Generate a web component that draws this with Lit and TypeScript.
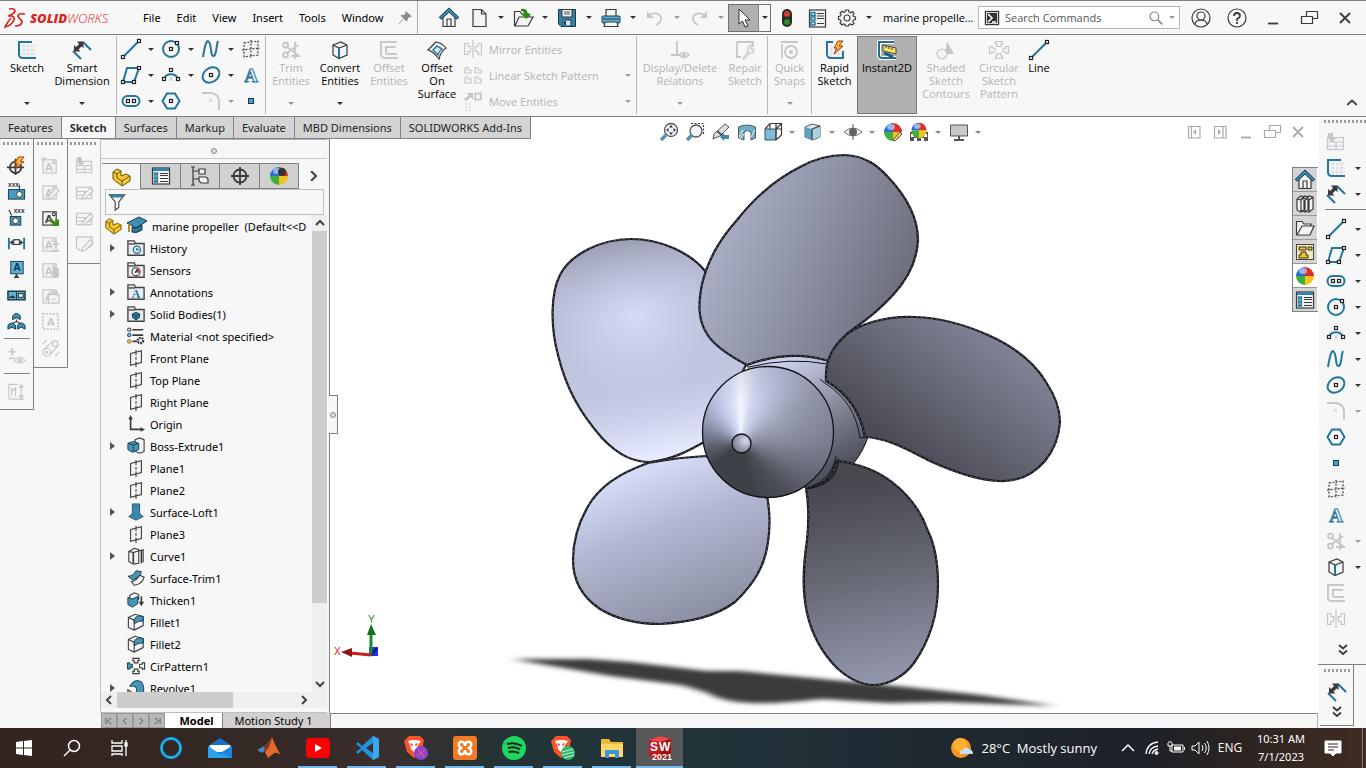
import { LitElement, html, svg, css, nothing } from "lit";
import { customElement, state } from "lit/decorators.js";

const node = (x: number, y: number) => svg`<rect class="n" x=${x - 1.5} y=${y - 1.5} width="3" height="3"/>`;
const folder = svg`<path d="M1 18V2H8L9.500 5H19V18Z" fill="#e9edf0" stroke="#444" stroke-width="1.500"/><path d="M1.500 5.500H9" stroke="#444" stroke-width="1.500"/>`;
const ball = svg`<path fill="#2b6fd0" d="M10 10V1A9 9 0 0 0 1 10Z"/><path fill="#d8312a" d="M10 10V1A9 9 0 0 1 19 10Z"/><path fill="#3fae3a" d="M10 10H1A9 9 0 0 0 10 19Z"/><path fill="#f2c21c" d="M10 10H19A9 9 0 0 1 10 19Z"/><ellipse cx="8" cy="5" rx="4" ry="3" fill="#fff" opacity=".5"/>`;
const cube = svg`<path class="k lt" d="M3 5L11 2L17 5V15L9 18.500L3 15Z"/><path class="k" d="M3 5L9 8L17 5M9 8V18"/>`;
const note = svg`<rect class="k lt" x="2" y="4" width="14" height="14"/><text class="ga" x="4" y="16">A</text><circle class="k" cx="13.500" cy="6.500" r="1.500"/>`;
const pencil = svg`<path class="k lt" d="M8 15L16 6L19 9L11 17L7 18Z"/>`;
const sheet = svg`<rect class="k lt" x="1.500" y="5.500" width="16" height="12"/><path class="k" d="M1 10H18M1 14H18M10 10V18"/>`;

const ICONS: Record<string, unknown> = {
  sketch: svg`<path class="g" d="M7 4V18M11 4V18M15 4V18M4 6H19M4 10H19M4 14H19"/><path class="b" d="M15 2H2V14Q2 18 6 18H19"/>`,
  dim: svg`<path class="b" d="M11 2L19 10M1 11L9 19"/><path class="fk" d="M11.500 1.500V8L9.500 6.500L6.500 9.500L8.500 11.500H2V5L4 7L7 4L5 1.500Z"/>`,
  line: svg`<path class="b" d="M2 18L18 2"/>${node(2, 18)}${node(18, 2)}`,
  circle: svg`<circle class="b" cx="10" cy="10" r="8"/>${node(10, 10)}${node(16, 4)}`,
  spline: svg`<path class="b" d="M2 18C4 5 6 0 8 3C11 7 9 18 13 17C16 15 15 6 17 2"/>`,
  gridplane: svg`<path class="k dash lt" d="M3 4L17 2V16L3 18Z"/><path class="k dash" d="M10 1V19M1 11L19 9"/>`,
  para: svg`<path class="b" d="M6 3H18L13 17H2Z"/>${node(18, 3)}${node(2, 17)}${node(13, 17)}`,
  arc: svg`<path class="b" d="M3 14A7.500 7.500 0 0 1 17 14"/><path class="g2" d="M8 12L12 16M12 12L8 16"/>${node(3, 14)}${node(17, 14)}${node(10, 5)}`,
  ellipse: svg`<ellipse class="b" cx="10" cy="10" rx="9" ry="7" transform="rotate(-35 10 10)"/>${node(10, 10)}`,
  text: svg`<text class="ta" x="10" y="17">A</text>`,
  slot: svg`<rect class="b" x="1.500" y="5" width="17" height="10" rx="5"/>${node(7, 10)}${node(13, 10)}`,
  hex: svg`<path class="b" d="M6 2.500H14L18.500 10L14 17.500H6L1.500 10Z"/>${node(10, 10)}`,
  fillet: svg`<path class="gb" d="M1 2H10Q18 3 18 11V19"/><path class="g2" d="M8 8L11 11M11 8L8 11"/>`,
  point: svg`<rect x="7.500" y="7.500" width="5" height="5" fill="#4aa3cf" stroke="#0c3a55"/>`,
  trim: svg`<circle class="k2" cx="4.500" cy="5" r="2.500"/><circle class="k2" cx="4.500" cy="15" r="2.500"/><path class="k2" d="M6 7L18 16M6 13L17 5M14 2V19M10 16H19"/>`,
  convert: svg`${cube}<path class="b" d="M9 8V18"/>`,
  offset: svg`<path class="gb" d="M18 2H2V14Q2 18 6 18H19"/><path class="gb" d="M17 7H7V12Q7 14 9 14H18"/>`,
  surface: svg`<path class="k lt" d="M1 10L9 2Q15 3 19 8Q14 11 12 19Q7 12 1 10Z"/><path class="b1" d="M6 10L10 6L15 9Q12 11 11 15Z"/>`,
  mirror: svg`<path class="k" d="M10 1V19M1.500 4.500H5V7.500H7.500V12.500H5V15.500H1.500ZM18.500 4.500H15V7.500H12.500V12.500H15V15.500H18.500Z"/>`,
  pattern: svg`<path class="k" d="M2 2.500H5V5H8V8H2ZM12 2.500H15V5H18V8H12ZM2 12H5V14H8V18H2ZM12 12H15V14H18V18H12Z"/>`,
  move: svg`<path class="fk" d="M1 8L6 4L3 2H10V9L8 6L3 10Z"/><rect class="k2" x="12" y="2.500" width="6" height="6"/><path class="g2 dash" d="M2 13H9M2 16H9M2 19H9"/>`,
  relation: svg`<path class="k2" d="M7 1V15M1 15H11"/><path class="k" d="M9 15Q14 9 19 15Q14 20 9 15Z"/><circle class="fk" cx="14" cy="15" r="2"/>`,
  repair: svg`<path class="k2" d="M2 2H18V7M2 2V17H6"/><path class="k lt" d="M9 17L13 12V7L16 5V9L19 9L18 13L14 13L10 19H8Z"/>`,
  snap: svg`<path class="k2" d="M1 2H18M2 4V18"/><circle class="k2" cx="11" cy="12" r="6"/><circle class="fk" cx="11" cy="12" r="2"/>`,
  rapid: svg`<path class="g" d="M6 6V18M10 6V18M14 6V18M4 10H18M4 14H18"/><path class="b" d="M8 2H2V14Q2 18 6 18H18V11"/><path d="M13 1L18 1L14 6H18L9 14L12 8H9Z" fill="#ffb52e" stroke="#a2380c"/>`,
  instant: svg`<path d="M17 2H2V15Q2 18 5 18H19" fill="none" stroke="#fff" stroke-width="4"/><path d="M17 2H2V15Q2 18 5 18H19" fill="none" stroke="#1f6f94" stroke-width="2"/><path d="M6 5L19 8V14L6 11Z" fill="#ffe35c" stroke="#444"/><path d="M9 6V8M12 7V9M15 8V10" stroke="#333"/><path d="M7 13L16 17" stroke="#175c84" stroke-width="3"/>`,
  shaded: svg`<path class="fk" d="M11 1L18 14H9Z"/><circle class="k lt" cx="6" cy="14" r="5"/>`,
  circular: svg`<path class="k lt" d="M6.500 1.500H13.500V4H12V6.500H8V4H6.500ZM6.500 18.500H13.500V16H12V13.500H8V16H6.500ZM.5 6.500V13.500H3V12H6V8H3V6.500ZM19.500 6.500V13.500H17V12H14V8H17V6.500Z"/>`,
  home: svg`<path class="k lt" d="M4 9V18.500H16V9L10 3Z"/><path d="M8 18V11H12V18" class="k"/><path d="M1 10.500L10 2L19 10.500" fill="none" stroke="#123a50" stroke-width="3.600"/><path d="M1.500 10L10 2L18.500 10" fill="none" stroke="#3b90b8" stroke-width="1.800"/>`,
  page: svg`<path class="k lt" d="M4 1.500H12.500L17 6V18.500H4Z"/><path class="k" d="M12.500 1.500V6H17"/>`,
  open: svg`<path class="k lt" d="M1.500 18V3.500H7L9 6H16V9"/><path class="k lt" d="M2 18L6 9H20L15 18Z"/><path fill="#2e8b0c" d="M8 1Q14 0 15 6H18L13.500 11L8 6H11Q11 3 8 3Z"/>`,
  save: svg`<path d="M1.500 1.500H18.500V18.500H4L1.500 16Z" fill="#3482a8" stroke="#123a50"/><path d="M5 1.500H15V9H5Z" fill="#f2f2f2" stroke="#333"/><path d="M7 4H13M7 6H13" stroke="#555"/><path d="M6 12H14V18H6Z" fill="#d4e6ef" stroke="#123a50"/><path d="M8 13V17" stroke="#123a50" stroke-width="2"/>`,
  print: svg`<path class="k lt" d="M5 8V1.500H15V8"/><rect x="1" y="8" width="18" height="7" rx="1" fill="#5fb0d4" stroke="#123a50"/><path d="M2 11H18" stroke="#123a50"/><path class="k lt" d="M4 14H16L17 18.500H3Z"/>`,
  undo: svg`<path class="k2" d="M4 7Q12 3 16 9Q17 14 11 17"/><path class="fk" d="M2 3V10H9Z"/>`,
  redo: svg`<path class="k2" d="M16 7Q8 3 4 9Q3 14 9 17"/><path class="fk" d="M18 3V10H11Z"/>`,
  cursor: svg`<path d="M5 1L16 12H11L14 18L11 19L8.500 13L5 16Z" fill="#fff" stroke="#333"/>`,
  traffic: svg`<rect x="5" y="1" width="10" height="18" rx="5" fill="#2a2a2a"/><circle cx="10" cy="6" r="3" fill="#d8392a"/><circle cx="10" cy="14" r="3" fill="#2c8c28"/>`,
  list: svg`<rect class="k lt" x="2.500" y="2" width="16" height="17"/><rect class="b1" x="4" y="4.500" width="4" height="3"/><rect class="b1" x="4" y="9" width="4" height="3"/><rect class="b1" x="4" y="14" width="4" height="3"/><path class="k" d="M10 5.500H17M10 8H17M10 10.500H17M10 15.500H17"/>`,
  props: svg`<rect class="k lt" x="1.500" y="2" width="17" height="16"/><path d="M2 2H18V5H2Z" fill="#3482a8"/><rect class="b1" x="3.500" y="7" width="3" height="2"/><rect class="b1" x="3.500" y="11" width="3" height="2"/><rect class="b1" x="3.500" y="15" width="3" height="1"/><path class="k" d="M9 7.500H17M9 9.500H17M9 12.500H17M9 15.500H17"/>`,
  gear: svg`<circle class="k" cx="10" cy="10" r="3"/><path class="k" d="M8.500 2H11.500L12 4L14 4.800L15.800 3.500L17 5.500L15.900 7L16.500 8.500L18.500 9V11.500L16.500 12L15.800 13.500L17 15.500L15 17L13.500 15.900L12 16.500L11.500 18H8.500L8 16.500L6.500 15.900L5 17L3 15L4.200 13.500L3.500 12L1.500 11.500V8.500L3.500 8L4.200 6.500L3 5L5 3.200L6.500 4.300L8 3.800Z"/>`,
  pin: svg`<path d="M11 2L18 8L14 9L12 14L5 7L11 6ZM8 11L2 18" fill="#8a8a8a" stroke="#8a8a8a"/>`,
  term: svg`<rect x="1" y="1" width="18" height="18" fill="#333"/><rect x="3" y="3" width="14" height="14" fill="none" stroke="#fff"/><path d="M5 5L10 10L5 15M10 15H15" stroke="#fff" stroke-width="2" fill="none"/>`,
  search: svg`<circle cx="8" cy="8" r="5.500" fill="none" stroke="#888" stroke-width="1.400"/><path d="M12 12L18 18" stroke="#888" stroke-width="2"/>`,
  user: svg`<circle class="k" cx="10" cy="10" r="9"/><circle class="k" cx="10" cy="8" r="4"/><path class="k" d="M4 16Q5 12 10 12Q15 12 16 16"/>`,
  help: svg`<circle class="k" cx="10" cy="10" r="9"/><path class="k2" d="M7 8Q7 5 10 5Q13 5 13 8Q13 9.500 10 11V13M10 14V16"/>`,
  min: svg`<path class="k2" d="M5 15.500H15"/>`,
  restore: svg`<path class="k" d="M7.500 8V3.500H18.500V10.500H14M2.500 8.500H13.500V15.500H2.500Z"/>`,
  close: svg`<path class="k2" d="M5 5L15 15M15 5L5 15"/>`,
  zoomfit: svg`<circle cx="12" cy="8" r="6.500" fill="#eef4f8" stroke="#555" stroke-width="1.300"/><path d="M12 3L14 5.500H10ZM12 13L14 10.500H10ZM7 8L9.500 6V10ZM17 8L14.500 6V10Z" fill="#333"/><path d="M7 13L2 18" stroke="#5b91ae" stroke-width="3.500"/>`,
  zoomarea: svg`<path class="k dash" d="M6 1.500H18.500V13"/><circle cx="11" cy="9" r="6" fill="#eef4f8" stroke="#555" stroke-width="1.300"/><path d="M7 13L2 18" stroke="#5b91ae" stroke-width="3.500"/>`,
  prev: svg`<path d="M14 2L18 5L9 14L2 17L3 12Z" fill="#ddd" stroke="#555"/><path d="M6 9L12 14" stroke="#555" stroke-width="2"/><path d="M9 15L13 11V13H18V17H13V19Z" fill="#3d86ad"/>`,
  section: svg`<path d="M1.500 5Q10 1 18.500 5V16L14 18V10Q10 7 7 10V18L1.500 16Z" fill="#6dadc9" stroke="#555"/><path d="M2 15L6 8M3 17L7 12M14 15L18 8" stroke="#fff"/>`,
  orient: svg`<path d="M2 7H13V18H2Z" fill="#7fbad6" stroke="#30586d"/><path class="k" d="M2 7L7 1.500H18.500V13L13 18M13 7L18 2M7 2V7M13 7H19M13 2V18"/>`,
  shade: svg`<path d="M2 5L9 2L17 4V15L10 18L2 15Z" fill="#d9e9f0" stroke="#555"/><path d="M2 5L9 7V18L2 15Z" fill="#5da2c2"/><path d="M9 7L17 4V15L9 18Z" fill="#a9d0e1"/><path class="k" d="M9 7L17 4M9 7V18"/>`,
  eye: svg`<path d="M1 10Q10 2 19 10Q10 18 1 10Z" fill="#eee" stroke="#777"/><circle cx="10" cy="10" r="4" fill="#666"/><path d="M10 2V18" stroke="#555"/>`,
  paint: svg`${ball}<path d="M10 18L17 10L19 12L12 19Z" fill="#f2d28a" stroke="#555"/>`,
  scene: svg`<path d="M1 10H19V19H1Z" fill="#555"/><path d="M2 12H5V15H2ZM15 12H18V15H15ZM5 16H8V19H5ZM12 16H15V19H12Z" fill="#fff"/><g transform="translate(1.500 0) scale(.85)">${ball}</g>`,
  monitor: svg`<path d="M1.500 3H18.500V14H1.500Z" fill="#c8c8c8" stroke="#555"/><path d="M10 14V17M5 18H15" stroke="#555" stroke-width="2"/>`,
  boxl: svg`<path class="k" d="M4.500 4.500H16V16H4.500ZM7.500 4V16"/><path class="fk" d="M12 7V13L9 10Z"/>`,
  boxr: svg`<path class="k" d="M4.500 4.500H16V16H4.500ZM13 4V16"/><path class="fk" d="M8 7V13L11 10Z"/>`,
  books: svg`<path class="k lt" d="M2 5L6 2L9 3V16L6 18L2 16ZM2 5L6 6L9 3M6 6V18M6 5L10 2L13 3V16L10 18L6 16M10 6V18M10 5L14 2L18 3V15L14 18L10 17M10 5L14 6L18 3M14 6V18"/>`,
  file: svg`<path class="k lt" d="M1.500 17V3.500H7L9 6H16V8"/><path class="k lt" d="M2 17L7 8H19L15 17Z"/>`,
  palette: svg`<rect x="1.500" y="2.500" width="17" height="15" fill="#f4e9b8" stroke="#444"/><path d="M4 5H11V8H4ZM13 5H17V8H13ZM6 10H11V13H13V16H4V13H6Z" fill="#f2c21c" stroke="#333"/>`,
  ball: ball,
  part: svg`<path d="M2 5L6 2L10 4V9L15 7L19 9V14L11 19L2 12Z" fill="#f5c933" stroke="#6d5200"/><path d="M2 5L6 7L10 4M6 7V11L11 14L19 9M11 14V19" fill="none" stroke="#6d5200"/>`,
  config: svg`<path class="k" d="M3 1V19M3 5H9M3 13H9M1 1H5M1 19H5"/><path class="k lt" d="M9 3H15V8H9ZM9 11H16L18 13V17H11L9 15Z"/>`,
  target: svg`<circle class="k2" cx="10" cy="10" r="6.500"/><path class="k2" d="M10 1V19M1 10H19"/>`,
  gun: svg`${ball}<circle cx="13" cy="6" r="4" fill="#333"/>`,
  filter: svg`<path d="M1.500 2H18.500L12 10V16L8 19V10Z" class="k lt"/><path d="M2 2H18L16 5H4Z" fill="#3482a8"/>`,
  cap: svg`<path d="M0 7L12 1L20 5L9 12Z" fill="#3f8fb5" stroke="#12384c"/><path d="M5 11V16Q9 18 15 14V9L9 12Z" fill="#2f7599" stroke="#12384c"/><path d="M2 8V16" stroke="#b88a2a" stroke-width="2"/>`,
  history: svg`${folder}<circle class="b1" cx="11" cy="12" r="4"/><path class="k" d="M11 10V12H13"/>`,
  sensors: svg`${folder}<circle class="k lt" cx="10" cy="12" r="4.500"/><path d="M10 12L14 9V14Z" fill="#d8392a"/><path class="k2" d="M9 13L12 9"/>`,
  annot: svg`${folder}<text class="fa" x="10" y="17">A</text>`,
  solids: svg`${folder}<path d="M6 10L10 8L14 10V14L10 16.500L6 14Z" fill="#3482a8" stroke="#123a50"/><path d="M6 10L10 12L14 10M10 12V16" fill="none" stroke="#123a50"/>`,
  material: svg`<circle class="k" cx="2.500" cy="3" r="1.800"/><circle cx="2.500" cy="9" r="2" fill="#69b5d8" stroke="#246"/><circle cx="2.500" cy="16" r="2" fill="#f2c21c" stroke="#864"/><path class="k2" d="M6 3H18M6 9H18M6 16H11"/><circle cx="15" cy="15" r="3" fill="none" stroke="#333" stroke-width="2.500" stroke-dasharray="2 1"/>`,
  plane: svg`<path class="k lt" d="M4 5L16 2V15L4 18Z"/><path class="k" d="M10 1V7M10 9V12M10 14V20"/>`,
  origin: svg`<path class="k2" d="M4 4V16H16"/><path class="fk" d="M1.500 5L4 0L6.500 5ZM15 13.500L20 16L15 18.500Z"/>`,
  extrude: svg`<path class="k lt" d="M9 3L14 1L19 3V16L14 18L9 16Z"/><path d="M1 7L7 5L13 7V14L6 17L1 14Z" fill="#4796bb" stroke="#123a50"/><path d="M1 7L7 9L13 7M7 9V16" fill="none" stroke="#123a50"/>`,
  loft: svg`<path d="M6 1H14V11Q15 14 18 15L10 19L2 15Q5 14 6 11Z" fill="#3c86ac" stroke="#1c4f69"/>`,
  curve: svg`<path class="k lt" d="M2 5L8 1.500L13 3V18L7 19L2 16Z"/><path class="k2" d="M7 6V18M16 3V18"/><path class="k" d="M2 5L7 6L18 3V17"/>`,
  trims: svg`<path d="M1 8Q7 8 10 2L16 3Q15 9 6 12Z" fill="#4796bb" stroke="#12384c"/><path class="k lt" d="M5 14Q11 13 14 7L19 9Q17 17 8 18Z"/>`,
  thicken: svg`<path class="k lt" d="M3 5L8 2L13 4V9H3Z"/><path d="M1 7L6 9L12 6V14L6 18L1 15Z" fill="#4796bb" stroke="#12384c"/><path class="k2" d="M16 6V13"/><path class="fk" d="M13 12H19L16 17Z"/>`,
  filletf: svg`<path class="k lt" d="M1.500 5L9 1.500L18 4V14L8 19L1.500 16Z"/><path d="M8 8Q9 4 13 3L18 4V9Q13 8 8 12Z" fill="#4796bb" stroke="#12384c"/><path class="k" d="M1.500 5L8 8V19"/>`,
  cirf: svg`<path class="k lt" d="M6.500 1.500H13.500V4H12V6.500H8V4H6.500ZM6.500 18.500H13.500V16H12V13.500H8V16H6.500ZM19.500 6.500V13.500H17V12H14V8H17V6.500Z"/><path d="M.5 6.500V13.500H3V12H6V8H3V6.500Z" fill="#4796bb" stroke="#12384c"/>`,
  revolve: svg`<path d="M3 8Q8 -1 16 3Q20 8 18 17L10 16Q12 9 8 8Z" fill="#4796bb" stroke="#12384c"/><path class="k lt" d="M1 12L10 18H1Z"/>`,
  d1: svg`<circle class="k2" cx="9" cy="12" r="6"/><path class="k2" d="M9 3V20M0 12H18"/><path d="M12 1H18L14 6H18L9 13L11 8H8Z" fill="#ffb52e" stroke="#a2380c"/>`,
  d2: svg`<text class="xx" x="1" y="5">xxx</text><rect x="1.500" y="8" width="17" height="10" fill="#4a9bc2" stroke="#12384c"/><circle cx="13" cy="13" r="3" fill="#fff" stroke="#333"/><path class="k" d="M13 3V9"/>`,
  d3: svg`<text class="xx" x="7" y="5">xxx</text><rect x="3.500" y="9" width="11" height="9" fill="#4a9bc2" stroke="#12384c"/><circle cx="9" cy="13.500" r="3" fill="#fff" stroke="#333"/><path class="k" d="M2 2L5 8"/>`,
  d4: svg`<path class="b" d="M2 4V16M18 4V16"/><path class="k" d="M4 9H8M12 9H16"/><path class="fk" d="M3 9L6 6V12ZM17 9L14 6V12Z"/><rect class="k lt" x="7" y="6" width="6" height="5"/>`,
  d5: svg`<rect x="4" y="1.500" width="13" height="13" fill="#62b1d6" stroke="#12384c"/><text class="da" x="10.500" y="12">A</text><path class="k2" d="M10 15V18"/><path class="fk" d="M7 19L10 15L13 19Z"/>`,
  d6: svg`<rect x="1" y="5.500" width="18" height="9" fill="#62b1d6" stroke="#12384c" stroke-width="1.500"/><path d="M10 6V14" stroke="#12384c"/><path class="k lt" d="M3 12A3 3 0 0 1 8 12Z"/><rect class="k lt" x="12" y="8" width="5" height="4"/>`,
  d7: svg`<path d="M6 8V4Q10 -1 14 4V8L10 6ZM1 18V14Q5 9 9 14V18L5 16ZM11 18V14Q15 9 19 14V18L15 16Z" fill="#3f8fb5" stroke="#12384c"/><path class="k" d="M10 8V10L6 12M10 10L14 12"/>`,
  d8: svg`<path class="k2" d="M2 5H9M5.500 1V9M2 12H8"/><path class="k" d="M8 14Q13 8 19 14Q13 20 8 14Z"/><circle class="fk" cx="13.500" cy="14" r="2"/>`,
  d9: svg`<path class="k" d="M2 2.500H12M2 18H18M2 2V18M5 6V15M5 10L9 6V15M15 3V17"/><path class="fk" d="M12 6L15 2L18 6ZM12 14L15 18L18 14Z"/>`,
  n1: svg`${note}<path class="k" d="M3 1V6M0 3H6"/>`,
  n2: svg`${note}${pencil}`,
  n3: svg`${note}<path d="M10 10L15 15V12H19V19H12V16L9 13Z" fill="#3d8f10"/>`,
  n4: svg`${note}<path class="k2" d="M12 11H19M15.500 7V15M12 18H19"/>`,
  n5: svg`${note}<rect class="fk" x="12" y="8" width="7" height="11" rx="3"/>`,
  n6: svg`${note}<rect class="k lt" x="8" y="9" width="11" height="9"/><path class="k" d="M10 9V6H17V9M11 14H16"/>`,
  n7: svg`<rect class="k2 dash" x="2" y="2" width="16" height="16"/><text class="ga" x="6" y="15">A</text>`,
  n8: svg`<circle class="k" cx="6" cy="15" r="4"/><circle class="fk" cx="6" cy="15" r="1.500"/><circle class="k" cx="15" cy="6" r="3"/><path class="k" d="M2 13L13 3M9 18L18 8M2 6L6 2M15 19L19 15"/>`,
  s1: svg`${sheet}<path class="fk" d="M2 1H7V6H10L6 11L2 6Z"/>`,
  s2: svg`${sheet}${pencil}`,
  s3: svg`<path class="k lt" d="M1.500 3H18V12L10 17H4L1.500 14Z"/>${pencil}`,
  chev2: svg`<path class="k2" d="M6 5L10 8.500L14 5M6 10.500L10 14L14 10.500"/>`,
};

const icon = (name: string, cls = "") =>
  html`<svg class="ic ${cls}" viewBox="0 0 20 20" aria-hidden="true">${ICONS[name]}</svg>`;
const caret = (dim = false) => html`<i class="caret ${dim ? "dim" : ""}"></i>`;

type Big = { icon: string; label: string; w: number; off?: boolean; drop?: boolean; on?: boolean };
const big = (b: Big) => html`
  <button class="big ${b.off ? "off" : ""} ${b.on ? "on" : ""}" style="width:${b.w}px">
    ${icon(b.icon)}<span class="lbl">${b.label}</span>${b.drop ? caret(b.off) : nothing}
  </button>`;

const TREE: [string, string, boolean][] = [
  ["history", "History", true], ["sensors", "Sensors", false], ["annot", "Annotations", true],
  ["solids", "Solid Bodies(1)", true], ["material", "Material <not specified>", false],
  ["plane", "Front Plane", false], ["plane", "Top Plane", false], ["plane", "Right Plane", false],
  ["origin", "Origin", false], ["extrude", "Boss-Extrude1", true], ["plane", "Plane1", false],
  ["plane", "Plane2", false], ["loft", "Surface-Loft1", true], ["plane", "Plane3", false],
  ["curve", "Curve1", true], ["trims", "Surface-Trim1", false], ["thicken", "Thicken1", false],
  ["filletf", "Fillet1", false], ["filletf", "Fillet2", false], ["cirf", "CirPattern1", false],
  ["revolve", "Revolve1", true],
];

/* name, has drop-down, disabled */
const SIDE: [string, boolean, boolean][] = [
  ["s1", false, true], ["sketch", true, false], ["dim", true, false], ["", false, false],
  ["line", true, false], ["para", true, false], ["slot", true, false], ["circle", true, false],
  ["arc", true, false], ["spline", true, false], ["ellipse", true, false], ["fillet", true, true],
  ["hex", false, false], ["point", false, false], ["gridplane", false, false], ["text", false, false],
  ["trim", true, true], ["convert", true, false], ["offset", false, true], ["mirror", false, true],
];

const TASKS: [string, string, unknown][] = [
  ["Cortana", "", svg`<circle cx="12" cy="12" r="9.500" fill="none" stroke="#0a9be0" stroke-width="3"/><circle cx="12" cy="12" r="9.500" fill="none" stroke="#35c5f5" stroke-width="1"/>`],
  ["Mail", "", svg`<path d="M0 10L12 2L24 10V22H0Z" fill="#1473c8"/><path d="M2 9H22V16H2Z" fill="#fff"/><path d="M0 10L12 18L24 10V22H0Z" fill="#2ba2ee"/><path d="M12 17L24 10V22Z" fill="#1d86db"/>`],
  ["MATLAB", "", svg`<path d="M0 14L7 10L10 13L5 17Z" fill="#4a86c5"/><path d="M7 10Q12 6 15 1L12 15L8 17Z" fill="#7d3b25"/><path d="M15 1Q19 12 24 19Q19 15 16 18L11 22L8 16Q13 12 15 1Z" fill="#e8692b"/>`],
  ["YouTube", "run", svg`<rect x="0" y="2" width="24" height="20" rx="4" fill="#f00"/><path d="M9 8L16 12L9 16Z" fill="#fff"/>`],
  ["Visual Studio Code", "run", svg`<path d="M18 0L24 3V21L18 24L7 14L3 18L1 16L6 12L1 8L3 6L7 10ZM18 7L11 12L18 17Z" fill="#2292e0" fill-rule="evenodd"/><path d="M18 0L24 3V21L18 24Z" fill="#3aa9f2"/>`],
  ["Brave", "run", svg`<path d="M5 0H16L20 4L18 16L10 22L3 16L0 5Z" fill="#fb542b"/><path d="M4 5L8 4H12L17 5L14 9L13 13L10 16L7 13L6 9Z" fill="#fff"/><path d="M6 7L9 8L8 11ZM14 7L11 8L12 11Z" fill="#fb542b"/><circle cx="17" cy="17" r="7" fill="#8548c8"/><path d="M13 20L21 14M14 13L20 21" stroke="#e04a9a" stroke-width="1.500"/>`],
  ["XAMPP", "run", svg`<rect x="0" y="0" width="24" height="24" rx="3" fill="#f37a24"/><path d="M7 6Q12 5 12 10Q12 5 17 6Q20 9 16 12Q20 15 17 18Q12 19 12 14Q12 19 7 18Q4 15 8 12Q4 9 7 6Z" fill="none" stroke="#fff" stroke-width="2.500"/>`],
  ["Spotify", "run", svg`<circle cx="12" cy="12" r="12" fill="#1ed760"/><path d="M5 8Q13 6 20 10M6 12Q13 10 18 13.500M6.500 16Q12 14.500 17 17" stroke="#14231a" stroke-width="2" fill="none"/>`],
  ["Brave Profile 2", "run", svg`<path d="M5 0H16L20 4L18 16L10 22L3 16L0 5Z" fill="#fb542b"/><path d="M4 5L8 4H12L17 5L14 9L13 13L10 16L7 13L6 9Z" fill="#fff"/><path d="M6 7L9 8L8 11ZM14 7L11 8L12 11Z" fill="#fb542b"/><circle cx="17" cy="17" r="7" fill="#31b66a"/><path d="M11 16L22 13M11 19L23 16M13 22L23 19" stroke="#c9f2da"/>`],
  ["File Explorer", "run", svg`<path d="M1 3H9L11 6H23V21H1Z" fill="#ecb93b"/><path d="M1 8H23V21H1Z" fill="#ffd868"/><path d="M5 22V14H19V22H15V18H9V22Z" fill="#3f95dc"/>`],
  ["SOLIDWORKS 2021", "run active", svg`<path d="M1 4L12 0L23 3V20L12 24L1 20Z" fill="#c8161d"/><path d="M1 4L12 0L23 3L12 6Z" fill="#e8494a"/><path d="M12 6L23 3V20L12 24Z" fill="#9c0f15"/><text class="sw1" x="2" y="15">S</text><text class="sw1" x="11" y="15">W</text><text class="sw2" x="4" y="24">2021</text>`],
];

@customElement("app-root")
export class AppRoot extends LitElement {
  @state() private tab = "Sketch";

  static styles = css`
    :host { display: flex; flex-direction: column; height: 100vh; min-width: 1100px; overflow: hidden;
      font: 11px/13px "Open Sans", "Noto Sans", sans-serif; color: #000; background: #f7f7f7; --b: #22759c; --k: #3a3a3a; --lt: #f4f4f4; }
    * { box-sizing: border-box; }
    button { font: inherit; color: inherit; background: none; border: 0; padding: 0; margin: 0; display: flex; align-items: center; justify-content: center; }
    ul { list-style: none; margin: 0; padding: 0; }
    a { color: inherit; text-decoration: none; }
    input { font: inherit; border: 0; outline: 0; background: none; padding: 0; min-width: 0; }
    .ic { width: 20px; height: 20px; flex: none; display: block; overflow: visible; }
    .b { fill: none; stroke: var(--b); stroke-width: 2; }
    .b1 { fill: #cfe8f3; stroke: var(--b); stroke-width: 1.4; }
    .k { fill: none; stroke: var(--k); stroke-width: 1.2; }
    .k2 { fill: none; stroke: var(--k); stroke-width: 1.8; }
    .lt { fill: var(--lt); }
    .fk { fill: var(--k); }
    .g { stroke: #dcdcdc; fill: none; }
    .g2 { stroke: #c8c8c8; fill: none; }
    .gb { stroke: #c8c8c8; fill: none; stroke-width: 2; }
    .n { fill: #fff; stroke: #222; stroke-width: 1.2; }
    .dash { stroke-dasharray: 2 1.5; }
    .ta { font: bold 19px "Liberation Serif", serif; fill: #f7f7f7; stroke: var(--b); stroke-width: 1; text-anchor: middle; }
    .fa { font: bold 13px "Liberation Serif", serif; fill: var(--b); text-anchor: middle; }
    .ga { font: bold 12px "Liberation Sans", sans-serif; fill: var(--k); }
    .da { font: bold 11px "Liberation Sans", sans-serif; fill: #12384c; text-anchor: middle; }
    .xx { font: bold 7px "Liberation Sans", sans-serif; fill: var(--k); }
    .sw1 { font: bold 12px "Liberation Sans", sans-serif; fill: #fff; }
    .sw2 { font: bold 9px "Liberation Sans", sans-serif; fill: #fff; }
    .off { --b: #c6c6c6; --k: #c6c6c6; color: #b3b3b3; }
    .caret { flex: none; width: 0; height: 0; border: 3px solid transparent; border-top-color: #333; border-bottom: 0; }
    .caret.dim { border-top-color: #999; }

    .title { display: flex; align-items: center; height: 35px; border-top: 1px solid #808080; border-bottom: 1px solid #808080; flex: none; padding-right: 3px; }
    .brand { display: flex; align-items: center; width: 132px; padding-left: 4px; gap: 4px; color: #d9261c; font: italic 800 13px/20px "Open Sans", sans-serif; }
    .brand svg { width: 22px; height: 22px; }
    .brand b { font-weight: 800; }
    .brand span { font-weight: 300; }
    .menu { display: flex; align-items: center; height: 100%; padding-left: 11px; gap: 16px; font-family: "Noto Sans", sans-serif; }
    .menu .ic { width: 16px; height: 16px; margin: 0 4px 0 -2px; }
    .rule { width: 1px; align-self: stretch; background: #b0b0b0; }
    .quick { display: flex; align-items: center; padding-left: 16px; height: 100%; }
    .quick button { height: 28px; }
    .quick .one { width: 30px; }
    .quick .drop { width: 44px; gap: 9px; }
    .quick .sel { width: 43px; border: 1px solid #707070; margin: 0 1px 0 0; justify-content: flex-start; }
    .quick .sel span { width: 30px; height: 26px; background: #b0b0b0; border-right: 1px solid #888; display: grid; place-items: center; margin-right: 3px; }
    .doc { margin-left: auto; width: 91px; white-space: nowrap; }
    .find { display: flex; align-items: center; height: 23px; width: 202px; margin: 0 3px 0 4px; padding: 0 4px 0 5px; border: 1px solid #b8b8b8; background: #fff; gap: 5px; }
    .find input { flex: 1; }
    .find input::placeholder { color: #555; opacity: 1; }
    .find .ic { width: 16px; height: 16px; }
    .win { display: flex; }
    .win button { width: 36px; height: 30px; }

    .ribbon { display: flex; height: 82px; flex: none; border-bottom: 1px solid #808080; padding: 1px 0 2px; }
    .grp { display: flex; border-right: 1px solid #b8b8b8; }
    .grp.first { padding-right: 6px; }
    .grp.last { border: 0; flex: 1; }
    .big { flex-direction: column; justify-content: flex-start; padding-top: 4px; text-align: center; }
    .big .lbl { white-space: pre; margin-top: 1px; }
    .big .caret { margin-top: auto; margin-bottom: 9px; }
    .big.on { background: #b0b0b0; border: 1px solid #777; padding-top: 3px; }
    .tools { display: grid; grid-template-columns: 40px 40px 40px 24px; grid-template-rows: repeat(3, 26px); padding-left: 4px; }
    .tools button { justify-content: flex-start; gap: 7px; }
    .lines { display: grid; grid-template-rows: repeat(3, 26px); width: 176px; padding: 0 5px 0 3px; }
    .lines button { justify-content: flex-start; gap: 6px; }
    .lines .caret { margin-left: auto; }
    .collapse { margin-left: auto; align-self: flex-end; width: 28px; height: 22px; }

    .main { display: flex; flex: 1; min-height: 0; }
    .center { display: flex; flex-direction: column; flex: 1; min-width: 0; }
    .work { display: flex; flex: 1; min-height: 0; }
    .left { width: 330px; flex: none; display: flex; flex-direction: column; border-right: 1px solid #808080; position: relative; z-index: 2; }
    .ctabs { display: flex; flex: none; height: 22px; width: max-content; border-bottom: 1px solid #808080; font-family: "Noto Sans", sans-serif; }
    .ctabs button { height: 21px; padding: 0 8px; border-right: 1px solid #808080; background: #d4d4d4; color: #222; white-space: nowrap; }
    .ctabs button.cur { background: #f7f7f7; font-weight: 700; color: #333; }
    .docks { display: flex; flex: 1; min-height: 0; }
    .dock { width: 34px; align-self: flex-start; border-right: 1px solid #808080; border-bottom: 1px solid #808080; display: flex; flex-direction: column; align-items: center; padding: 3px 0 7px; }
    .dock:first-child { padding-bottom: 5px; }
    .dock.third { width: 32px; border-right: 0; }
    .dock button { width: 32px; height: 26px; flex: none; }
    .dock .ic { width: 19px; height: 19px; }
    .grip { width: 28px; height: 3px; background: repeating-linear-gradient(90deg, #9a9a9a 0 2px, transparent 2px 4px); margin-bottom: 7px; flex: none; }
    .hr { width: 26px; height: 1px; background: #808080; margin: 4px 0; flex: none; }
    .panel { flex: 1; min-width: 0; display: flex; flex-direction: column; border-left: 1px solid #c0c0c0; margin-right: 2px; font-family: "Noto Sans", sans-serif; }
    .handle { height: 20px; border-top: 1px solid #a8b4bc; border-bottom: 1px solid #c8c8c8; display: grid; place-items: center; flex: none; padding-top: 4px; }
    .dot { width: 6px; height: 6px; border-radius: 50%; border: 1px solid #888; background: #ddd; }
    .ptabs { display: flex; height: 30px; padding: 4px 0 0 1px; flex: none; }
    .ptabs button { width: 40px; background: #d0d0d0; border: 1px solid #808080; border-left: 0; }
    .ptabs button.cur { background: #f7f7f7; border-bottom: 0; }
    .ptabs button.more { background: none; border: 0; width: 28px; }
    .filter { height: 26px; border: 1px solid #c0c0c0; margin: 0 3px 0 4px; display: flex; align-items: center; padding-left: 2px; gap: 4px; flex: none; }
    .filter .ic, .tree .ic { width: 18px; height: 18px; }
    .filter input { flex: 1; }
    .treebox { display: flex; flex: 1; min-height: 0; padding-left: 3px; }
    .tree { flex: 1; min-width: 0; overflow: hidden; }
    .tree li { display: flex; align-items: center; height: 22px; white-space: pre; gap: 5px; }
    .tree .root .ic + .ic { width: 20px; height: 20px; }
    .exp { width: 18px; height: 22px; flex: none; justify-content: flex-start; padding-left: 6px; }
    .exp i { border: 4px solid transparent; border-left: 5px solid #555; border-right: 0; }
    .vs { width: 15px; background: #efefef; display: flex; flex-direction: column; flex: none; }
    .vs button { height: 16px; flex: none; }
    .vs div { height: 78%; background: #cdcdcd; }
    .vs .end { margin-top: auto; }
    .hs { height: 16px; display: flex; background: #efefef; flex: none; }
    .hs button { width: 16px; }
    .hs div { width: 116px; background: #cdcdcd; }
    .hs .end { margin-left: auto; margin-right: 15px; }
    .foot { height: 5px; border-bottom: 1px solid #c0c0c0; flex: none; }
    .chev { width: 10px; height: 10px; fill: none; stroke: #444; stroke-width: 2; }
    .split { position: absolute; left: 329px; top: 278px; width: 9px; height: 39px; border: 1px solid #808080; border-left: 0; background: #f7f7f7; display: grid; place-items: center; }

    .view { flex: 1; min-width: 0; position: relative; background: #fff; }
    .model { width: 100%; height: 100%; display: block; }
    .cone { width: 132px; height: 132px; border-radius: 50%;
      background: radial-gradient(circle at 39px 77px, transparent 40px, rgba(70, 74, 92, .25) 100px),
        conic-gradient(from 0deg at 39px 77px, #f4f7ff 0deg, #d3d8f2 14deg, #c0c5e0 32deg, #a0a5ba 58deg, #868a9b 90deg, #6c6f7d 112deg, #4c4e57 138deg, #3f4148 165deg, #3f4148 232deg, #5b5e6a 262deg, #8488a0 292deg, #b9bede 325deg, #dde2fa 350deg, #f4f7ff 360deg); }
    .triad { position: absolute; left: 2px; bottom: 52px; width: 52px; height: 50px; font: 10px "Liberation Sans", sans-serif; overflow: visible; }
    .huds { position: absolute; top: 5px; left: 329px; display: flex; align-items: center; height: 20px; gap: 6px; }
    .huds .caret { margin-right: 2px; border-top-color: #888; }
    .mdi { position: absolute; right: 10px; top: 5px; display: flex; gap: 6px; --k: #aaa; }
    .pane { position: absolute; right: 0; top: 50px; width: 26px; border: 1px solid #808080; border-right: 0; }
    .pane button { width: 24px; height: 24px; background: #d4d4d4; border-bottom: 1px solid #999; }
    .pane button:last-child { border-bottom: 0; height: 23px; }
    .pane button.cur { background: #fff; }

    .bottom { display: flex; height: 15px; padding-left: 101px; flex: none; z-index: 3; font-family: "Noto Sans", sans-serif; }
    .bottom .nav { width: 16px; background: #b8b8b8; border: 1px solid #999; }
    .bottom .nav .chev { stroke: #888; width: 8px; height: 8px; }
    .bottom .bt { height: 15px; border-right: 1px solid #808080; }
    .bottom .m { width: 58px; background: #fff; font-weight: 700; padding-left: 6px; }
    .bottom .s { width: 108px; background: #d0d0d0; padding-right: 6px; }
    .bottom .rest { flex: 1; border-top: 1px solid #808080; border-right: 1px solid #9fb9c0; }

    .side { width: 48px; flex: none; display: flex; flex-direction: column; padding-top: 3px; }
    .side .row { display: flex; height: 26px; align-items: center; padding-left: 8px; gap: 9px; justify-content: flex-start; flex: none; }
    .side .grip { margin: 0 0 6px 6px; width: 42px; }
    .side .hr { margin: 2px 0 6px 7px; width: 41px; }
    .side .more { margin: 8px 0 4px 15px; }
    .edge { border-top: 1px solid #808080; flex: 1; display: flex; }
    .mini { border-right: 1px solid #808080; border-bottom: 1px solid #808080; width: 34px; margin: 0 0 2px 2px; flex: none; display: flex; flex-direction: column; align-items: center; padding-top: 4px; }
    .mini .grip { margin: 0 0 10px; width: 26px; }

    .task { height: 40px; flex: none; display: flex; color: #fff; font-size: 12px; line-height: 18px;
      background: linear-gradient(90deg, #33251f 0, #352a27 22%, #392f2d 28%, #223438 38%, #22333a 52%, #1f2a33 66%, #1e2129 84%, #2c2421 91%, #402c22 100%); }
    .task .sys { width: 48px; }
    .task .sys svg { width: 20px; height: 20px; }
    .task .app { width: 49px; }
    .task .app svg { width: 24px; height: 24px; overflow: visible; }
    .task .run { border-bottom: 2px solid #76b9ed; margin: 0 5px; width: 39px; padding-top: 2px; }
    .task .run.active { background: #56585a; margin: 0; width: 47px; }
    .task .pad { width: 2px; }
    .tray { margin-left: auto; display: flex; align-items: center; }
    .tray svg { width: 20px; height: 20px; flex: none; fill: none; stroke: #fff; }
    .wx { gap: 8px; margin-right: 19px; white-space: pre; font-size: 13px; }
    .tray .wx svg { width: 22px; height: 22px; stroke: none; }
    .tray .t { width: 24px; height: 40px; }
    .tray .lang { width: 36px; }
    .tray .clock { width: 66px; flex-direction: column; font: 11px/18px "Noto Sans", sans-serif; }
    .tray .note { width: 48px; height: 40px; padding-right: 10px; border-right: 1px solid #877; margin-right: 3px; box-sizing: content-box; width: 38px; }
  `;

  private titleBar() {
    const q = (n: string, d = true, off = false) =>
      html`<button class="${d ? "drop" : "one"} ${off ? "off" : ""}" aria-label=${n}>${icon(n)}${d ? caret(off) : nothing}</button>`;
    return html`
      <header class="title">
        <div class="brand">
          <svg viewBox="0 0 22 22" aria-hidden="true"><path d="M5 2Q11 1 11 4Q9 8 4 9Q11 8 10 13Q8 18 1 20Q4 14 7 11M21 7Q14 6 14 9Q15 12 18 14Q18 19 11 19" fill="none" stroke="#d9261c" stroke-width="1.700"/></svg>
          <div><b>SOLID</b><span>WORKS</span></div>
        </div>
        <nav class="menu">
          ${["File", "Edit", "View", "Insert", "Tools", "Window"].map((m) => html`<a href="#">${m}</a>`)}${icon("pin")}
        </nav>
        <div class="rule"></div>
        <div class="quick">
          ${q("home", false)}${q("page")}${q("open")}${q("save")}${q("print")}${q("undo", true, true)}${q("redo", true, true)}
          <button class="sel" aria-label="Select"><span>${icon("cursor")}</span>${caret()}</button>
          ${q("traffic", false)}${q("list", false)}${q("gear")}
        </div>
        <div class="doc">marine propelle...</div>
        <label class="find">${icon("term")}<input aria-label="Search Commands" placeholder="Search Commands">${icon("search")}${caret(true)}</label>
        <div class="win">${["user", "help", "min", "restore", "close"].map((n) => html`<button aria-label=${n}>${icon(n)}</button>`)}</div>
      </header>`;
  }

  private ribbon() {
    const t = (n: string, d = true, dim = false) => html`<button aria-label=${n}>${icon(n)}${d ? caret(dim) : nothing}</button>`;
    const l = (n: string, s: string, d = true) => html`<button class="off">${icon(n)}<span>${s}</span>${d ? caret(true) : nothing}</button>`;
    return html`
      <section class="ribbon">
        <div class="grp first">${big({ icon: "sketch", label: "Sketch", w: 54, drop: true })}${big({ icon: "dim", label: "Smart\nDimension", w: 56, drop: true })}</div>
        <div class="grp"><div class="tools">
          ${t("line")}${t("circle")}${t("spline")}${t("gridplane", false)}
          ${t("para")}${t("arc")}${t("ellipse")}${t("text", false)}
          ${t("slot")}${t("hex", false)}${t("fillet", true, true)}${t("point", false)}
        </div></div>
        <div class="grp">
          ${big({ icon: "trim", label: "Trim\nEntities", w: 50, off: true, drop: true })}
          ${big({ icon: "convert", label: "Convert\nEntities", w: 48, drop: true })}
          ${big({ icon: "offset", label: "Offset\nEntities", w: 50, off: true })}
          ${big({ icon: "surface", label: "Offset\nOn\nSurface", w: 46 })}
          <div class="lines">${l("mirror", "Mirror Entities", false)}${l("pattern", "Linear Sketch Pattern")}${l("move", "Move Entities")}</div>
        </div>
        <div class="grp">${big({ icon: "relation", label: "Display/Delete\nRelations", w: 86, off: true, drop: true })}${big({ icon: "repair", label: "Repair\nSketch", w: 44, off: true })}</div>
        <div class="grp">${big({ icon: "snap", label: "Quick\nSnaps", w: 43, off: true, drop: true })}</div>
        <div class="grp last">
          ${big({ icon: "rapid", label: "Rapid\nSketch", w: 45 })}
          ${big({ icon: "instant", label: "Instant2D", w: 60, on: true })}
          ${big({ icon: "shaded", label: "Shaded\nSketch\nContours", w: 58, off: true })}
          ${big({ icon: "circular", label: "Circular\nSketch\nPattern", w: 48, off: true })}
          ${big({ icon: "line", label: "Line", w: 32 })}
          <button class="collapse" aria-label="Collapse"><svg class="chev" viewBox="0 0 10 10"><path d="M0 7L5 2.500L10 7"/></svg></button>
        </div>
      </section>`;
  }

  private docks() {
    const b = (n: string, off = false) => html`<button class=${off ? "off" : ""} aria-label=${n}>${icon(n)}</button>`;
    return html`
      <div class="dock"><div class="grip"></div>${["d1", "d2", "d3", "d4", "d5", "d6", "d7"].map((n) => b(n))}<div class="hr"></div>${b("d8", true)}<div class="hr"></div>${b("d9", true)}</div>
      <div class="dock"><div class="grip"></div>${["n1", "n2", "n3", "n4", "n5", "n6", "n7", "n8"].map((n) => b(n, n !== "n3"))}</div>
      <div class="dock third"><div class="grip"></div>${["s1", "s2", "s2", "s3"].map((n) => b(n, true))}</div>`;
  }

  private panel() {
    const c = (d: string) => html`<svg class="chev" viewBox="0 0 10 10"><path d=${d}/></svg>`;
    return html`
      <aside class="panel">
        <div class="handle"><div class="dot"></div></div>
        <div class="ptabs">
          ${["part", "props", "config", "target", "gun"].map((n, i) => html`<button class=${i ? "" : "cur"} aria-label=${n}>${icon(n)}</button>`)}
          <button class="more" aria-label="More tabs">${c("M3 0L8 5L3 10")}</button>
        </div>
        <label class="filter">${icon("filter")}<input aria-label="Filter tree"></label>
        <div class="treebox">
          <ul class="tree">
            <li class="root">${icon("part")}${icon("cap")}<span>marine propeller  (Default&lt;&lt;D</span></li>
            ${TREE.map(([i, s, e]) => html`<li><button class="exp" aria-label="Expand ${s}" ?disabled=${!e}>${e ? html`<i></i>` : nothing}</button>${icon(i)}<span>${s}</span></li>`)}
          </ul>
          <div class="vs"><button aria-label="Scroll up">${c("M1 7L5 3L9 7")}</button><div></div><button class="end" aria-label="Scroll down">${c("M1 3L5 7L9 3")}</button></div>
        </div>
        <div class="hs"><button aria-label="Scroll left">${c("M7 1L3 5L7 9")}</button><div></div><button class="end" aria-label="Scroll right">${c("M3 1L7 5L3 9")}</button></div>
        <div class="foot"></div>
      </aside>`;
  }

  private model() {
    const blade = (d: string, fill: string) => svg`<path d=${d} fill=${fill} stroke="#14151a" stroke-width="2.200"/><path d=${d} fill="none" stroke="#8d91a5" stroke-width=".5" stroke-dasharray="3 2"/>`;
    const leftBlade = "M706 272C690 252 660 239 631 239C600 239 570 255 560 275C551 292 550 325 558 355C566 388 580 413 602 438C620 457 635 462 650 462C672 460 690 450 706 441L746 365Z";
    return html`
      <svg class="model" viewBox="330 117 988 596" role="img" aria-label="Marine propeller model">
        <defs>
          <filter id="soft" x="-10%" y="-30%" width="120%" height="160%"><feGaussianBlur stdDeviation="5 2"/></filter>
          <radialGradient id="gl" gradientUnits="userSpaceOnUse" cx="635" cy="318" r="150"><stop offset="0" stop-color="#d9def8"/><stop offset=".5" stop-color="#bcc1da"/><stop offset="1" stop-color="#b4b9d2"/></radialGradient>
          <linearGradient id="gl2" gradientUnits="userSpaceOnUse" x1="600" y1="240" x2="640" y2="460"><stop offset="0" stop-color="#9094a8" stop-opacity=".85"/><stop offset=".35" stop-color="#c8cde6" stop-opacity=".15"/><stop offset=".7" stop-color="#c4c9e6" stop-opacity=".7"/><stop offset="1" stop-color="#e6ebff"/></linearGradient>
          <linearGradient id="gt" gradientUnits="userSpaceOnUse" x1="725" y1="215" x2="905" y2="285"><stop offset="0" stop-color="#aaaec5"/><stop offset=".45" stop-color="#8f93a6"/><stop offset="1" stop-color="#6d6f7d"/></linearGradient>
          <linearGradient id="gr" gradientUnits="userSpaceOnUse" x1="900" y1="450" x2="990" y2="330"><stop offset="0" stop-color="#4a4b55"/><stop offset=".5" stop-color="#666875"/><stop offset="1" stop-color="#808497"/></linearGradient>
          <linearGradient id="gb" gradientUnits="userSpaceOnUse" x1="850" y1="485" x2="885" y2="680"><stop offset="0" stop-color="#474850"/><stop offset=".45" stop-color="#656772"/><stop offset="1" stop-color="#9397ad"/></linearGradient>
          <linearGradient id="gbl" gradientUnits="userSpaceOnUse" x1="640" y1="460" x2="700" y2="620"><stop offset="0" stop-color="#dce1fb"/><stop offset=".4" stop-color="#b4b9d4"/><stop offset="1" stop-color="#8b8fa1"/></linearGradient>
          <linearGradient id="gh" gradientUnits="userSpaceOnUse" x1="790" y1="360" x2="850" y2="470"><stop offset="0" stop-color="#c9ceea"/><stop offset=".5" stop-color="#858999"/><stop offset="1" stop-color="#474952"/></linearGradient>
          <radialGradient id="tip" cx=".7" cy=".35" r=".8"><stop offset="0" stop-color="#d5daf2"/><stop offset="1" stop-color="#6b6e7c"/></radialGradient>
        </defs>
        <path filter="url(#soft)" fill="#3a3a3a" d="M512 659L589 659L630 662L707 671L740 671L833 680L907 687L981 695L1056 706L944 702L888 703L822 699Q780 704 752 703Q725 703 705 692L681 685L611 676Z"/>
        <path d=${leftBlade} fill="url(#gl)"/>
        ${blade(leftBlade, "url(#gl2)")}
        ${blade("M706 456C685 457 665 460 648 463C615 475 602 487 592 500C578 521 573 540 573 560C573 580 582 597 600 609C618 620 640 624 660 624C690 622 715 617 735 602C755 583 765 565 768 542C771 522 769 508 767 495Z", "url(#gbl)")}
        <path d="M747 365Q790 349 829 361C855 372 875 405 868 437Q863 452 853 464L836 461Q830 485 806 489Z" fill="url(#gh)" stroke="#14151a"/>
        ${blade("M747 365C728 355 713 344 707 334C698 320 698 304 702 284C709 256 722 237 737 220C756 196 778 178 800 167C816 158 831 155 845 155C866 156 878 166 888 177C907 197 918 217 918 240C917 264 906 281 893 295C880 309 868 319 856 327C838 340 832 350 829 361Q790 349 747 365Z", "url(#gt)")}
        <path d="M749 367Q790 357 827 364" fill="none" stroke="#14151a"/>
        ${blade("M826 381C825 365 830 350 842 339C855 324 885 316 915 317C945 318 970 327 988 335C1015 347 1034 362 1046 382C1056 397 1060 410 1060 422C1059 438 1054 450 1045 461C1032 476 1015 482 998 481C975 480 950 470 932 462C908 450 888 438 865 437C860 410 845 392 826 381Z", "url(#gr)")}
        <path d="M820 379L826 384Q855 402 860 438L865 437" fill="none" stroke="#14151a"/>
        ${blade("M806 488C809 505 809 520 807 540C803 568 802 590 807 613C813 640 825 656 837 668C850 680 861 685 874 685C890 685 905 675 914 663C930 640 938 612 938 585C938 560 935 545 928 531C920 508 905 492 892 482C875 469 855 463 837 461Q832 486 806 488Z", "url(#gb)")}
        <path d="M836 456Q832 480 810 487M838 458Q840 484 806 489" fill="none" stroke="#14151a"/>
        <foreignObject x="702" y="366" width="132" height="132"><div class="cone"></div></foreignObject>
        <circle cx="768" cy="432" r="65.500" fill="none" stroke="#14151a" stroke-width="1.300"/>
        <circle cx="741.500" cy="443.500" r="9.500" fill="url(#tip)" stroke="#14151a" stroke-width="1.300"/>
      </svg>
      <svg class="triad" viewBox="0 0 52 50" aria-hidden="true">
        <rect x="37" y="36" width="9" height="9" fill="#2430e0"/><path d="M40 43L45 37" stroke="#0a1080" stroke-width="2"/>
        <path d="M39 43V19" stroke="#1c8a2a" stroke-width="3"/><path d="M35 24L39 13L44 24Z" fill="#176f22"/>
        <path d="M39 44L18 42" stroke="#c61f1f" stroke-width="3"/><path d="M20 37L9 41L20 46Z" fill="#8f1414"/>
        <text x="36" y="12" fill="#1c8a2a">Y</text><text x="2" y="44" fill="#e02020">X</text>
      </svg>`;
  }

  render() {
    const tabs = ["Features", "Sketch", "Surfaces", "Markup", "Evaluate", "MBD Dimensions", "SOLIDWORKS Add-Ins"];
    const navs = ["M8 1L3 5L8 9M1 1V9", "M7 1L3 5L7 9", "M3 1L7 5L3 9", "M2 1L7 5L2 9M9 1V9"];
    return html`
      ${this.titleBar()}${this.ribbon()}
      <main class="main">
        <div class="center">
          <div class="work">
            <div class="left">
              <div class="ctabs">${tabs.map((t) => html`<button class=${t === this.tab ? "cur" : ""} @click=${() => (this.tab = t)}>${t}</button>`)}</div>
              <div class="docks">${this.docks()}${this.panel()}</div>
              <div class="split"><div class="dot"></div></div>
            </div>
            <div class="view">
              ${this.model()}
              <div class="huds">
                ${icon("zoomfit")}${icon("zoomarea")}${icon("prev")}${icon("section")}${icon("orient")}${caret(true)}${icon("shade")}${caret(true)}${icon("eye")}${caret(true)}${icon("paint")}${icon("scene")}${caret(true)}${icon("monitor")}${caret(true)}
              </div>
              <div class="mdi">${["boxl", "boxr", "min", "restore", "close"].map((n) => html`<button aria-label=${n}>${icon(n)}</button>`)}</div>
              <div class="pane">${["home", "books", "file", "palette", "ball", "props"].map((n) => html`<button class=${n === "ball" ? "cur" : ""} aria-label=${n}>${icon(n)}</button>`)}</div>
            </div>
          </div>
          <div class="bottom">
            ${navs.map((d) => html`<button class="nav" aria-label="Scroll tabs"><svg class="chev" viewBox="0 0 10 10"><path d=${d}/></svg></button>`)}
            <button class="bt m">Model</button><button class="bt s">Motion Study 1</button><div class="rest"></div>
          </div>
        </div>
        <aside class="side">
          <div class="grip"></div>
          ${SIDE.map(([n, d, off]) => n ? html`<button class="row ${off ? "off" : ""}" aria-label=${n}>${icon(n)}${d ? caret(off) : nothing}</button>` : html`<div class="hr"></div>`)}
          ${icon("chev2", "more")}
          <div class="edge"><div class="mini"><div class="grip"></div>${icon("dim")}${icon("chev2")}</div></div>
        </aside>
      </main>
      <footer class="task">
        <button class="sys" aria-label="Start"><svg viewBox="0 0 20 20"><path d="M2 4L9 3V9.500H2ZM10 3L18 2V9.500H10ZM2 10.500H9V17L2 16ZM10 10.500H18V18L10 17Z" fill="#fff"/></svg></button>
        <button class="sys" aria-label="Search"><svg viewBox="0 0 20 20" fill="none" stroke="#fff" stroke-width="1.500"><circle cx="12" cy="8" r="5.500"/><path d="M8 12L2 18"/></svg></button>
        <button class="sys" aria-label="Task View"><svg viewBox="0 0 20 20" fill="none" stroke="#fff" stroke-width="1.300"><path d="M2 2V5H12V2M2 8H12V13H2ZM2 18V16H12V18M16 2V18"/><rect x="15" y="5" width="2" height="3" fill="#fff"/></svg></button>
        <div class="pad"></div>
        ${TASKS.map(([n, c, s]) => html`<button class="app ${c}" aria-label=${n}><svg viewBox="0 0 24 24">${s}</svg></button>`)}
        <div class="tray">
          <button class="wx"><svg viewBox="0 0 22 22"><circle cx="10" cy="11" r="10" fill="#f7941d"/><circle cx="9" cy="8" r="7" fill="#fbb034"/><path d="M9 17Q8 13 12 13Q14 8 18 12Q22 13 22 17Z" fill="#c9dcfa"/></svg><span>28°C  Mostly sunny</span></button>
          <button class="t" aria-label="Hidden icons"><svg viewBox="0 0 20 20"><path d="M4 13L10 7L16 13" stroke-width="1.500"/></svg></button>
          <button class="t" aria-label="Network"><svg viewBox="0 0 20 20"><path d="M4 16Q5 5 16 4M7 16Q8 9 16 8M10 16Q11 12 16 11" stroke-width="1.300"/><circle cx="14.500" cy="15" r="1.500" fill="#fff"/></svg></button>
          <button class="t" aria-label="Battery"><svg viewBox="0 0 20 20"><path d="M6 7H17V14H6ZM18.500 9V12M2 5V8H6V5M4 8V13H6M3 3V5M5 3V5"/><rect x="8" y="8.500" width="7" height="4" fill="#fff" stroke="none"/></svg></button>
          <button class="t" aria-label="Volume"><svg viewBox="0 0 20 20"><path d="M2 8H5L9 4V16L5 12H2ZM12 7Q14 10 12 13M14.500 5Q18 10 14.500 15M17 3Q21 10 17 17"/></svg></button>
          <button class="lang">ENG</button>
          <button class="clock"><span>10:31 AM</span><span>7/1/2023</span></button>
          <button class="note" aria-label="Notifications"><svg viewBox="0 0 20 20"><path d="M2 3H18V15H13L10 18L7 15H2Z" fill="#fff"/><path d="M5 6H15M5 9H15M5 12H11" stroke="#2c2421"/></svg></button>
        </div>
      </footer>`;
  }
}
